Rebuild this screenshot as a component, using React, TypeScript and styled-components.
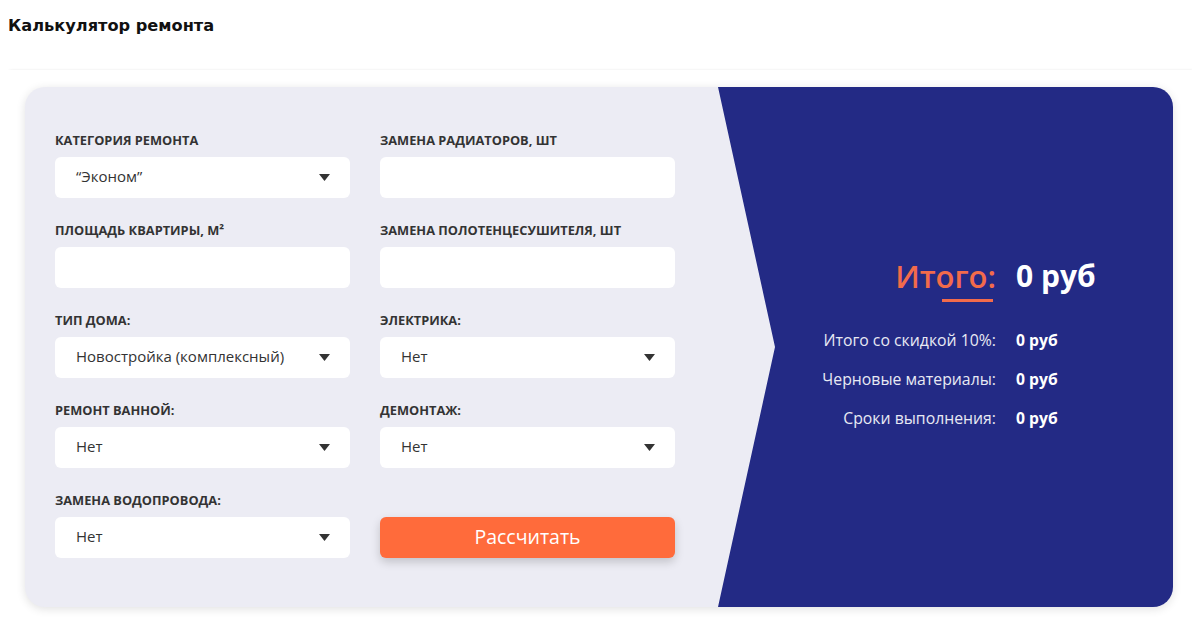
import React from 'react';
import styled, { createGlobalStyle } from 'styled-components';

const GlobalStyle = createGlobalStyle`
    body {
        margin: 8px;
        background: #ffffff;
        font-family: "Open Sans", "Noto Sans", sans-serif;
    }
    * {
        box-sizing: border-box;
    }
`

type Field = {
    label: string;
    value?: string;
    select: boolean;
}

const leftFields: Field[] = [
    { label: 'Категория ремонта', value: '“Эконом”', select: true },
    { label: 'Площадь квартиры, м²', select: false },
    { label: 'Тип дома:', value: 'Новостройка (комплексный)', select: true },
    { label: 'Ремонт ванной:', value: 'Нет', select: true },
    { label: 'Замена водопровода:', value: 'Нет', select: true },
]

const rightFields: Field[] = [
    { label: 'Замена радиаторов, шт', select: false },
    { label: 'Замена полотенцесушителя, шт', select: false },
    { label: 'Электрика:', value: 'Нет', select: true },
    { label: 'Демонтаж:', value: 'Нет', select: true },
]

const results = [
    { label: 'Итого со скидкой 10%:', value: '0 руб' },
    { label: 'Черновые материалы:', value: '0 руб' },
    { label: 'Сроки выполнения:', value: '0 руб' },
]

const Caret = () => (
    <svg width="11" height="7" viewBox="0 0 11 7">
        <path d="M0 0 L11 0 L5.5 7 Z" fill="#333333" />
    </svg>
)

const FormField = ({ field }: { field: Field }) => (
    <StField>
        <StLabel>{field.label}</StLabel>
        {field.select ? (
            <StSelect>
                <span>{field.value}</span>
                <Caret />
            </StSelect>
        ) : (
            <StInput type="text" />
        )}
    </StField>
)

const App = () => {
    // сетка: левая колонка, правая колонка по строкам
    const cells: (Field | null)[] = []
    leftFields.forEach((f, i) => {
        cells.push(f)
        cells.push(rightFields[i] ?? null)
    })

    return (
        <>
            <GlobalStyle />
            <StTitle>Калькулятор ремонта</StTitle>
            <StFrame>
                <StCard>
                    <StForm>
                        {cells.map((cell, i) =>
                            cell ? (
                                <FormField key={i} field={cell} />
                            ) : (
                                <StButtonWrap key={i}>
                                    <StButton>Рассчитать</StButton>
                                </StButtonWrap>
                            )
                        )}
                    </StForm>
                    <StResult>
                        <StGrid>
                            <StTotalLabel>Итого:</StTotalLabel>
                            <StTotalValue>0 руб</StTotalValue>
                            {results.map((r) => (
                                <React.Fragment key={r.label}>
                                    <StRowLabel>{r.label}</StRowLabel>
                                    <StRowValue>{r.value}</StRowValue>
                                </React.Fragment>
                            ))}
                        </StGrid>
                    </StResult>
                </StCard>
            </StFrame>
        </>
    );
};

const StTitle = styled.h1`
    margin: 8px 0 34px;
    font-family: "DejaVu Sans", Verdana, sans-serif;
    font-size: 16.2px;
    line-height: 20px;
    font-weight: 700;
    color: #111111;
`

const StFrame = styled.div`
    width: 100%;
    background: #ffffff;
    padding: 17px 19px 24px 17px;
    box-shadow: 2px 2px 4px rgba(0, 0, 0, 0.22), 0 0 2px rgba(0, 0, 0, 0.03);
`

const StCard = styled.div`
    display: flex;
    height: 520px;
    border-radius: 20px;
    overflow: hidden;
    background: #ececf4;
    box-shadow: 0 2px 10px rgba(0, 0, 0, 0.12);
`

const StForm = styled.div`
    width: 693px;
    flex-shrink: 0;
    display: grid;
    grid-template-columns: 295px 295px;
    column-gap: 30px;
    row-gap: 24px;
    align-content: start;
    padding: 45px 0 0 30px;
`

const StField = styled.div`
    display: flex;
    flex-direction: column;
`

const StLabel = styled.div`
    font-size: 12.8px;
    line-height: 17px;
    font-weight: 700;
    text-transform: uppercase;
    color: #333333;
    margin-bottom: 8px;
`

const StSelect = styled.div`
    height: 41px;
    border-radius: 6px;
    background: #ffffff;
    display: flex;
    align-items: center;
    justify-content: space-between;
    padding: 0 20px 3px 21px;
    font-size: 15px;
    color: #333333;
    svg {
        margin-top: 3px;
    }
`

const StInput = styled.input`
    height: 41px;
    border-radius: 6px;
    background: #ffffff;
    border: none;
    outline: none;
    padding: 0 20px;
    font-family: inherit;
    font-size: 15px;
`

const StButtonWrap = styled.div`
    display: flex;
    align-items: flex-end;
`

const StButton = styled.button`
    width: 100%;
    height: 41px;
    border: none;
    border-radius: 6px;
    background: #ff6b3b;
    color: #ffffff;
    font-family: inherit;
    font-size: 19.5px;
    padding: 0 0 3px;
    box-shadow: 0 4px 10px rgba(0, 0, 0, 0.18);
    cursor: pointer;
`

const StResult = styled.div`
    flex: 1;
    background: #232a85;
    clip-path: polygon(0 0, 100% 0, 100% 100%, 0 100%, 57px 50%);
    display: flex;
    align-items: center;
    justify-content: center;
    padding-left: 27px;
`

const StGrid = styled.div`
    display: grid;
    grid-template-columns: auto auto;
    column-gap: 20px;
    row-gap: 16px;
    align-items: center;
    margin-top: -8px;
`

const StTotalLabel = styled.div`
    justify-self: end;
    position: relative;
    font-size: 31px;
    line-height: 40px;
    font-weight: 600;
    color: #f26b4b;
    margin-bottom: 17px;
    &::after {
        content: '';
        position: absolute;
        right: 3px;
        bottom: -6px;
        width: 51px;
        height: 3px;
        background: #f26b4b;
    }
`

const StTotalValue = styled.div`
    font-size: 30px;
    line-height: 40px;
    font-weight: 700;
    color: #ffffff;
    margin-bottom: 17px;
`

const StRowLabel = styled.div`
    justify-self: end;
    font-size: 15.8px;
    line-height: 23px;
    color: #e8e9f3;
`

const StRowValue = styled.div`
    font-size: 15.7px;
    line-height: 23px;
    font-weight: 700;
    color: #ffffff;
`

export default App;
